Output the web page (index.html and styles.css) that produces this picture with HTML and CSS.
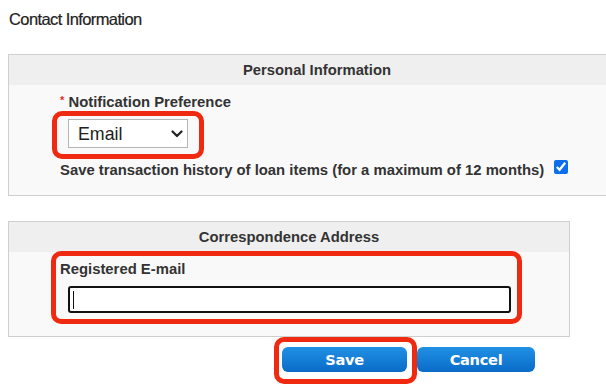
FILE: index.html
```html
<!DOCTYPE html>
<html>
<head>
<meta charset="utf-8">
<link rel="stylesheet" href="styles.css">
</head>
<body>
<h1 class="title">Contact Information</h1>

<section class="panel panel-personal">
  <div class="panel-head">Personal Information</div>
  <div class="panel-body">
    <div class="field-label"><span class="req">*</span> Notification Preference</div>
    <div class="select-wrap mark mark-select">
      <select class="select">
        <option>Email</option>
      </select>
      <svg class="chev" width="12" height="8" viewBox="0 0 12 8"><polyline points="1.5,1.5 6,6 10.5,1.5" fill="none" stroke="#222" stroke-width="2.2" stroke-linecap="round" stroke-linejoin="round"/></svg>
    </div>
    <label class="check-row">
      <span>Save transaction history of loan items (for a maximum of 12 months)</span>
      <input type="checkbox" class="check" checked>
    </label>
  </div>
</section>

<section class="panel panel-address">
  <div class="panel-head">Correspondence Address</div>
  <div class="panel-body">
    <div class="email-group mark mark-email">
      <div class="field-label">Registered E-mail</div>
      <input type="text" class="text-input">
    </div>
  </div>
</section>

<div class="actions">
  <div class="mark mark-save"><button class="btn">Save</button></div>
  <button class="btn btn-cancel">Cancel</button>
</div>
</body>
</html>
```

FILE: styles.css
```css
html {
  margin: 0;
  padding: 0;
  overflow: hidden;
  background: #fff;
}
body {
  margin: 0;
  padding: 0 0 20px 8px;
  min-height: 389px;
  box-sizing: border-box;
  font-family: "Liberation Sans", Arial, sans-serif;
  color: #333;
}
.title {
  margin: 9px 0 0 1px;
  font-size: 16.5px;
  line-height: 20px;
  font-weight: normal;
  letter-spacing: -0.6px;
  color: #222;
  -webkit-text-stroke: 0.2px #222;
}
.panel {
  border: 1px solid #cfcfcf;
  background: #f9f9f9;
  box-sizing: border-box;
}
.panel-personal {
  margin-top: 25px;
  width: 618px;
}
.panel-address {
  margin-top: 25px;
  width: 562px;
}
.panel-head {
  height: 30px;
  line-height: 30px;
  background: #efefef;
  text-align: center;
  font-weight: bold;
  font-size: 14.8px;
  color: #333;
}
.panel-body {
  padding: 8px 0 16px 51px;
}
.panel-address .panel-body {
  padding-bottom: 23px;
}
.field-label {
  font-weight: bold;
  font-size: 14.85px;
  line-height: 18px;
  height: 18px;
  color: #333;
}
.req {
  position: relative;
  top: -3px;
  color: #e0301e;
  font-size: 11px;
}
.mark {
  position: relative;
}
.mark::after {
  content: "";
  position: absolute;
  border: 5px solid #f02a10;
  border-radius: 10px;
  pointer-events: none;
}
.select-wrap {
  margin: 8px 0 0 8px;
  width: 120px;
  height: 29px;
}
.mark-select::after {
  top: -8px;
  left: -16px;
  right: -16px;
  bottom: -11px;
}
.select {
  appearance: none;
  -webkit-appearance: none;
  display: block;
  width: 120px;
  height: 29px;
  box-sizing: border-box;
  margin: 0;
  border: 1px solid #b5b5b5;
  border-radius: 0;
  background: #fff;
  padding: 0 0 0 9px;
  font-family: "Liberation Sans", Arial, sans-serif;
  font-size: 17.8px;
  color: #222;
}
.chev {
  position: absolute;
  left: 103px;
  top: 11px;
}
.check-row {
  display: flex;
  align-items: flex-start;
  margin-top: 13px;
  font-weight: bold;
  font-size: 14.85px;
  line-height: 18px;
  color: #333;
}
.check {
  width: 14px;
  height: 14px;
  margin: -1px 0 0 10px;
  accent-color: #0a6fe8;
}
.email-group {
  width: 451px;
}
.mark-email::after {
  top: -9px;
  left: -9px;
  right: -11px;
  bottom: -11px;
}
.text-input {
  display: block;
  box-sizing: border-box;
  margin: 8px 0 0 8px;
  width: 443px;
  height: 27px;
  border: 2px solid #111;
  border-radius: 3px;
  outline: none;
  background: #fff linear-gradient(#111, #111) no-repeat 3px 3px / 1px 18px;
}
.actions {
  display: flex;
  gap: 10px;
  margin-top: 10px;
  padding-left: 274px;
}
.mark-save::after {
  top: -10px;
  left: -8px;
  right: -10px;
  bottom: -12px;
}
.btn {
  display: block;
  width: 125px;
  height: 25px;
  border: none;
  border-radius: 6px;
  padding: 0;
  background: linear-gradient(#2090e4, #0a6cc8);
  color: #fff;
  font-family: "DejaVu Sans", Verdana, sans-serif;
  font-weight: bold;
  font-size: 14.6px;
  letter-spacing: -0.3px;
}
.btn-cancel {
  width: 118px;
}
```
